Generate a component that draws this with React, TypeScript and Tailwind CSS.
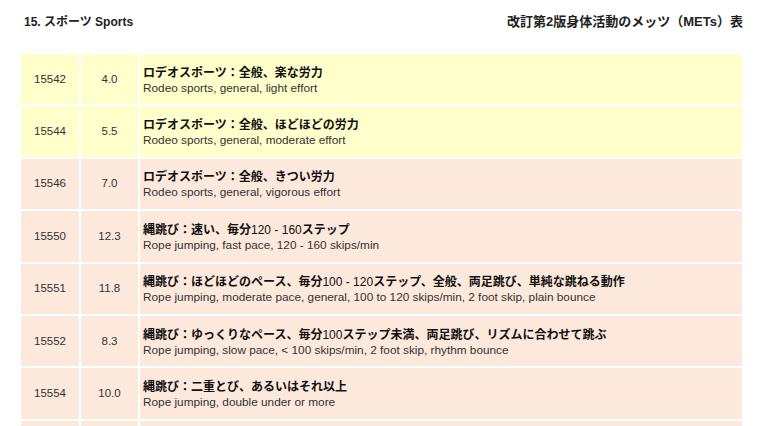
const rows = [
  { code: "15542", mets: "4.0", ja: "ロデオスポーツ：全般、楽な労力", en: "Rodeo sports, general, light effort", tone: "yellow" },
  { code: "15544", mets: "5.5", ja: "ロデオスポーツ：全般、ほどほどの労力", en: "Rodeo sports, general, moderate effort", tone: "yellow" },
  { code: "15546", mets: "7.0", ja: "ロデオスポーツ：全般、きつい労力", en: "Rodeo sports, general, vigorous effort", tone: "peach" },
  { code: "15550", mets: "12.3", ja: "縄跳び：速い、毎分120 - 160ステップ", en: "Rope jumping, fast pace, 120 - 160 skips/min", tone: "peach" },
  {
    code: "15551",
    mets: "11.8",
    ja: "縄跳び：ほどほどのペース、毎分100 - 120ステップ、全般、両足跳び、単純な跳ねる動作",
    en: "Rope jumping, moderate pace, general, 100 to 120 skips/min, 2 foot skip, plain bounce",
    tone: "peach",
  },
  {
    code: "15552",
    mets: "8.3",
    ja: "縄跳び：ゆっくりなペース、毎分100ステップ未満、両足跳び、リズムに合わせて跳ぶ",
    en: "Rope jumping, slow pace, < 100 skips/min, 2 foot skip, rhythm bounce",
    tone: "peach",
  },
  { code: "15554", mets: "10.0", ja: "縄跳び：二重とび、あるいはそれ以上", en: "Rope jumping, double under or more", tone: "peach" },
];

// digits inside the bold Japanese line are set in the regular Latin face
function JaLine({ text }: { text: string }) {
  const parts = text.split(/([0-9][0-9 \-]*[0-9])/);
  return (
    <>
      {parts.map((p, i) =>
        i % 2 === 1 ? (
          <span key={i} className="font-normal">
            {p}
          </span>
        ) : (
          <span key={i}>{p}</span>
        )
      )}
    </>
  );
}

export default function App() {
  return (
    <div
      className="w-[780px] bg-white text-[#222]"
      style={{ fontFamily: '"Liberation Sans", Arial, "Noto Sans CJK JP", sans-serif' }}
    >
      {/* Page header */}
      <div className="flex justify-between items-start pl-[24px] pr-[37px] pt-[14px] h-[54px]">
        <h1 className="text-[12px] font-bold leading-[16px]">15. スポーツ Sports</h1>
        <h2 className="text-[13px] font-bold leading-[16px]">改訂第2版身体活動のメッツ（METs）表</h2>
      </div>

      {/* Table */}
      <div className="ml-[21px] w-[721px] grid grid-cols-[58px_57px_1fr] gap-[2px]">
        {rows.map((r) => {
          const bg = r.tone === "yellow" ? "bg-[#ffffcc]" : "bg-[#fde8dc]";
          return (
            <div key={r.code} className="contents">
              <div className={`${bg} h-[50.4px] flex items-center justify-center text-[11.5px] text-[#333]`}>
                {r.code}
              </div>
              <div className={`${bg} h-[50.4px] flex items-center justify-center text-[11.5px] text-[#333]`}>
                {r.mets}
              </div>
              <div className={`${bg} h-[50.4px] flex flex-col justify-center pl-[3px] pt-[2px]`}>
                <div className="text-[12px] font-bold leading-[16px] text-[#111]">
                  <JaLine text={r.ja} />
                </div>
                <div className="text-[11.8px] leading-[15px] text-[#333]">{r.en}</div>
              </div>
            </div>
          );
        })}
        {/* next row, only its top edge is on screen */}
        <div className="bg-[#fde8dc] h-[50.4px]" />
        <div className="bg-[#fde8dc] h-[50.4px]" />
        <div className="bg-[#fde8dc] h-[50.4px]" />
      </div>
    </div>
  );
}
